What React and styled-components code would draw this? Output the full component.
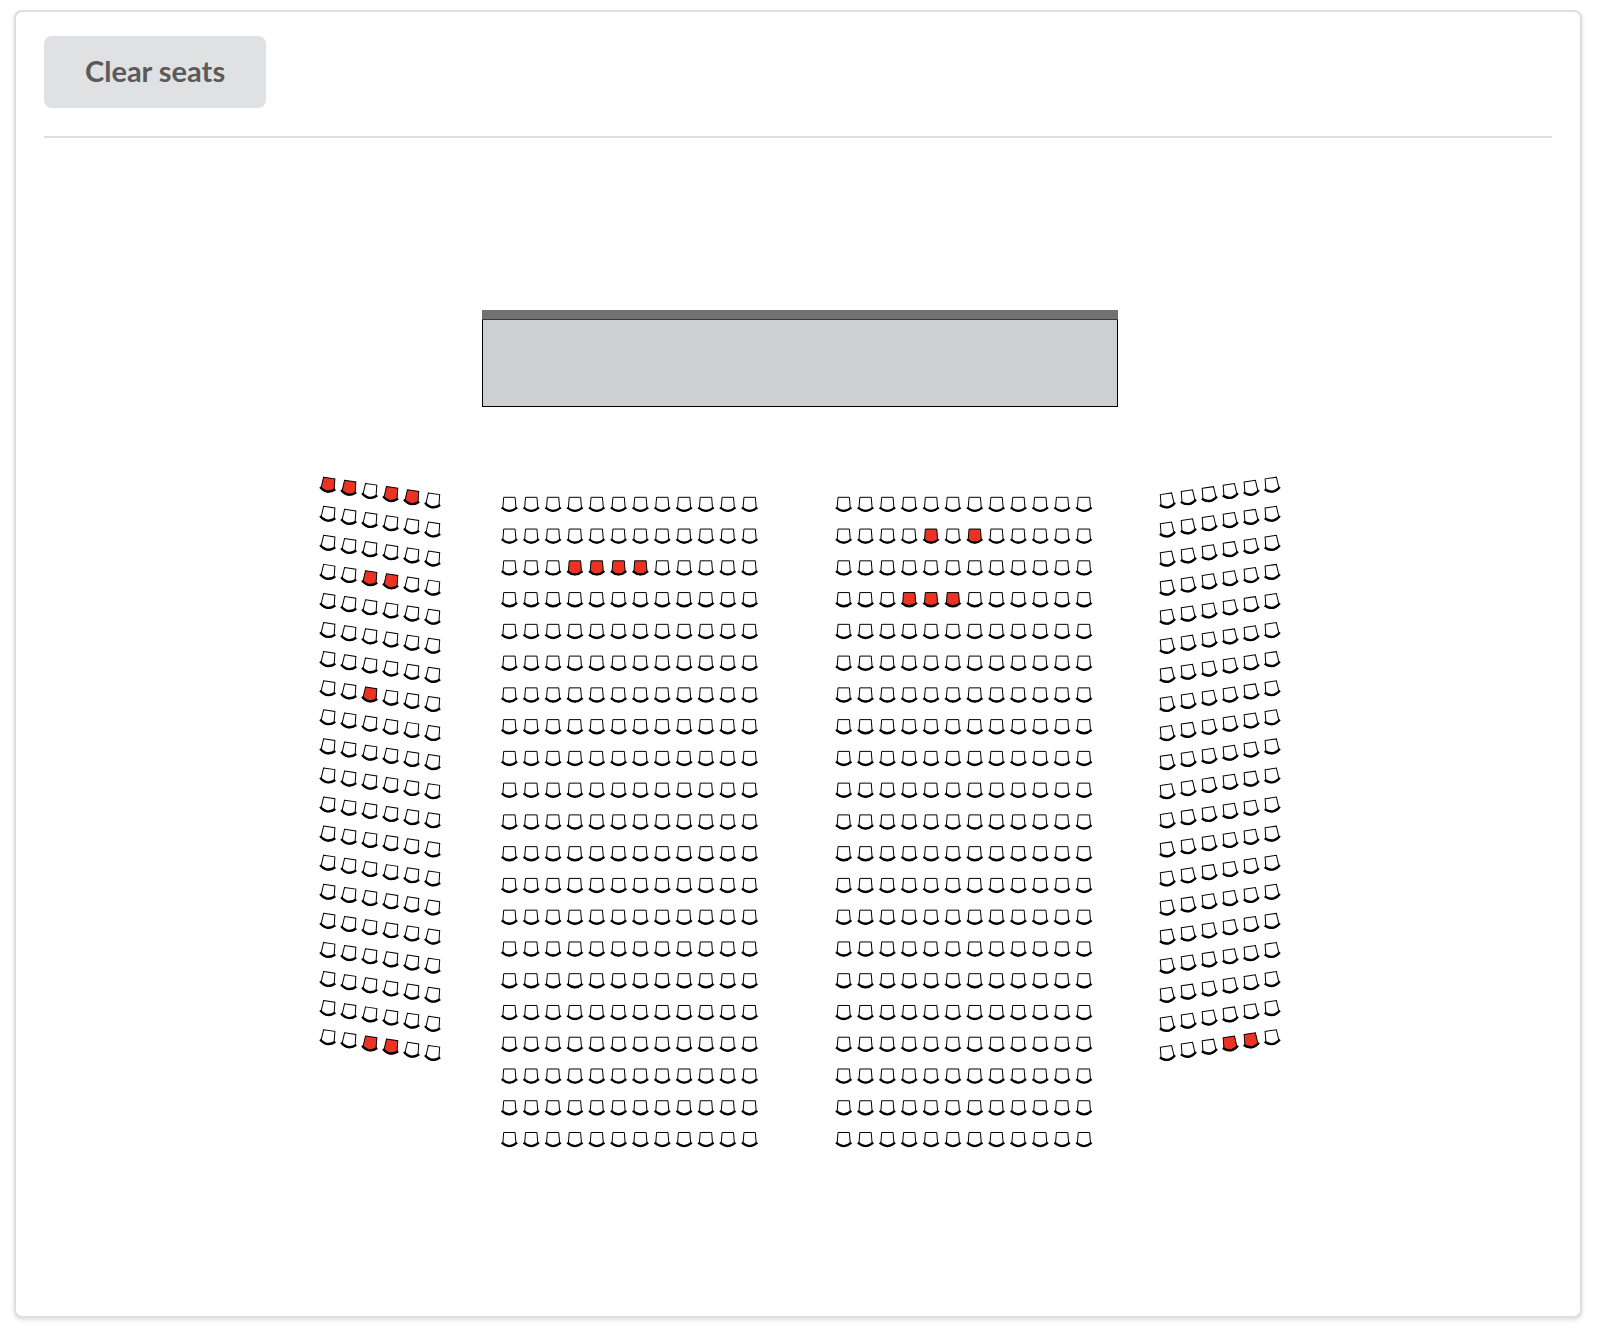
import React, { useState } from "react";
import styled, { createGlobalStyle } from "styled-components";

const GlobalStyle = createGlobalStyle`
  *, *::before, *::after {
    box-sizing: border-box;
  }
  body {
    margin: 0;
    background: #ffffff;
    font-family: Lato, "Liberation Sans", sans-serif;
    font-size: 28px;
  }
`;

const Page = styled.main`
  padding: 10px 16px 18px 14px;
`;

const Segment = styled.section`
  padding: 24px 28px 28px;
  background: #ffffff;
  border: 2px solid #dededf;
  border-radius: 8px;
  box-shadow: 0 2px 4px rgba(34, 36, 38, 0.15);
`;

const Toolbar = styled.header`
  display: flex;
  padding-bottom: 28px;
  border-bottom: 2px solid #dededf;
`;

const Button = styled.button`
  padding: 17px 41px 19px;
  border: 0;
  border-radius: 8px;
  background: #e0e1e2;
  color: #5a5a5a;
  font-family: inherit;
  font-size: 29px;
  font-weight: 700;
  line-height: 36px;
  cursor: pointer;

  &:hover {
    background: #cacbcd;
  }
`;

const Plan = styled.svg`
  display: block;
  width: 100%;
  height: auto;
`;

const StageFloor = styled.rect`
  fill: #cecfd1;
  stroke: #000000;
  stroke-width: 1;
`;

const StageEdge = styled.rect`
  fill: #717274;
`;

const SeatShape = styled.g`
  cursor: pointer;
  stroke: #000000;
  fill: ${(p) => (p.$taken ? "#ec3323" : "#ffffff")};
`;

const BLOCKS = [
  { id: "A", x: 284.2, y: 347, rows: 20, cols: 6, dx: 20.96, slope: 3.15, dy: 29.08, angle: 8.5 },
  { id: "B", x: 465.4, y: 366.4, rows: 21, cols: 12, dx: 21.84, slope: 0, dy: 31.76, angle: 0 },
  { id: "C", x: 799.7, y: 366.4, rows: 21, cols: 12, dx: 21.84, slope: 0, dy: 31.76, angle: 0 },
  { id: "D", x: 1123, y: 362.8, rows: 20, cols: 6, dx: 20.96, slope: -3.15, dy: 29.08, angle: -8.5 },
];

const INITIAL = [
  "A-0-0", "A-0-1", "A-0-3", "A-0-4",
  "A-3-2", "A-3-3",
  "A-7-2",
  "A-19-2", "A-19-3",
  "B-2-3", "B-2-4", "B-2-5", "B-2-6",
  "C-1-4", "C-1-6",
  "C-3-3", "C-3-4", "C-3-5",
  "D-19-3", "D-19-4",
];

function Seat({ x, y, angle, taken, onToggle }) {
  return (
    <SeatShape
      $taken={taken}
      transform={`translate(${x} ${y}) rotate(${angle})`}
      onClick={onToggle}
    >
      <path d="M-5.7 -7.1H5.7L6.6 4.2Q0 9.6 -6.6 4.2Z" strokeWidth="1" />
      <path d="M-7.7 3.1Q0 9.9 7.7 3.1" fill="none" strokeWidth="2.3" />
    </SeatShape>
  );
}

function Block({ block, taken, onToggle }) {
  const seats = [];
  for (let row = 0; row < block.rows; row += 1) {
    for (let col = 0; col < block.cols; col += 1) {
      const id = `${block.id}-${row}-${col}`;
      seats.push(
        <Seat
          key={id}
          x={block.x + col * block.dx}
          y={block.y + row * block.dy + col * block.slope}
          angle={block.angle}
          taken={taken.has(id)}
          onToggle={() => onToggle(id)}
        />
      );
    }
  }
  return <g>{seats}</g>;
}

export default function App() {
  const [taken, setTaken] = useState(() => new Set(INITIAL));

  const toggle = (id) =>
    setTaken((current) => {
      const next = new Set(current);
      if (!next.delete(id)) next.add(id);
      return next;
    });

  return (
    <>
      <GlobalStyle />
      <Page>
        <Segment>
          <Toolbar>
            <Button type="button" onClick={() => setTaken(new Set())}>
              Clear seats
            </Button>
          </Toolbar>
          <Plan viewBox="0 0 1508 1150" role="img" aria-label="Seating plan">
            <StageFloor x="438.5" y="181.5" width="635" height="87" />
            <StageEdge x="438" y="172" width="636" height="9.5" />
            {BLOCKS.map((block) => (
              <Block key={block.id} block={block} taken={taken} onToggle={toggle} />
            ))}
          </Plan>
        </Segment>
      </Page>
    </>
  );
}
